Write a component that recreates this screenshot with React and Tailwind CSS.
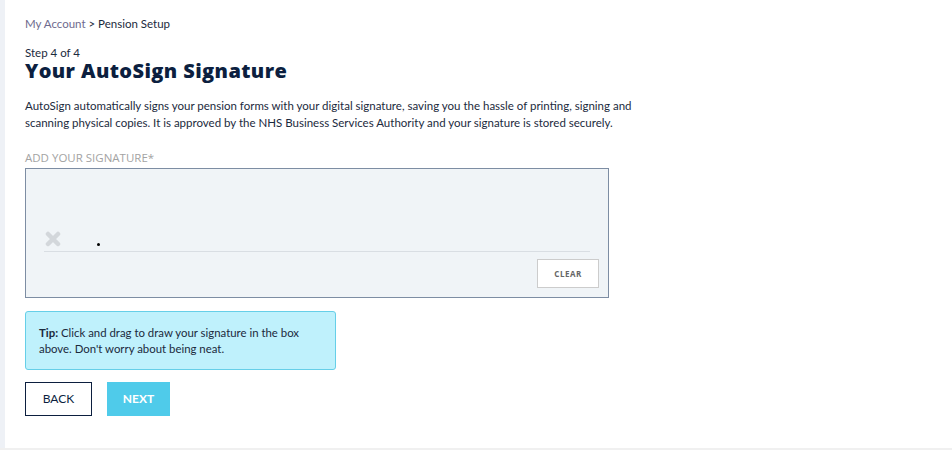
export default function App() {
  return (
    <div className="w-[952px] h-[450px] bg-[#f0f0f0] flex flex-col">
      <div className="flex h-[448px]">
        <div className="w-[5px] bg-[#eef1f6]" />
        <div className="flex-1 bg-white pl-[20px] pt-[16px] font-['Lato','Liberation_Sans',sans-serif] text-[#1b2a3d]">
          <div className="text-[11.5px] leading-[15px]">
            <span className="text-[#6e6a8e]">My Account</span>
            <span> &gt; Pension Setup</span>
          </div>
          <div className="mt-[15px] text-[11.5px] leading-[13px]">Step 4 of 4</div>
          <h1 className="font-['Open_Sans','Liberation_Sans',sans-serif] font-extrabold text-[20px] leading-[24px] text-[#0c1f3f] tracking-[0.4px]">
            Your AutoSign Signature
          </h1>
          <p className="mt-[14px] text-[11.5px] leading-[17px] w-[640px]">
            AutoSign automatically signs your pension forms with your digital signature, saving you the hassle of printing, signing and scanning physical copies. It is approved by the NHS Business Services Authority and your signature is stored securely.
          </p>
          <div className="mt-[20px] text-[11.5px] leading-[14px] text-[#a3a3a3] font-['Open_Sans','Liberation_Sans',sans-serif]">
            ADD YOUR SIGNATURE*
          </div>
          <div className="mt-[3px] w-[584px] h-[130px] border-[1.5px] border-[#7d8da3] bg-[#f0f4f7] flex flex-col pl-[18px] pr-[9px]">
            <div className="h-[60px]" />
            <div className="flex items-end h-[23px] w-[546px] border-b border-[#d9dee3] relative">
              <svg width="16" height="16" viewBox="0 0 16 16" className="mb-[4px] ml-[1px]">
                <path d="M3 3 L13 13 M13 3 L3 13" stroke="#d3d7db" strokeWidth="4.5" strokeLinecap="round" />
              </svg>
              <div className="absolute left-[53px] top-[14px] w-[2.5px] h-[2.5px] rounded-full bg-black" />
            </div>
            <div className="flex justify-end mt-[7px]">
              <button className="w-[62px] h-[29px] bg-white border border-[#cccccc] text-[8px] font-bold tracking-[0.5px] text-[#666] font-['Open_Sans','Liberation_Sans',sans-serif]">
                CLEAR
              </button>
            </div>
          </div>
          <div className="mt-[13px] w-[311px] h-[59px] bg-[#bff1fc] border border-[#66cfe8] rounded-[3px] px-[13px] pt-[13px] text-[11.4px] leading-[16px]">
            <b>Tip:</b> Click and drag to draw your signature in the box above. Don't worry about being neat.
          </div>
          <div className="mt-[12px] flex gap-[15px]">
            <button className="w-[67px] h-[34px] border-[1.5px] border-[#0c1f3f] text-[12px] text-[#0c1f3f]">BACK</button>
            <button className="w-[63px] h-[34px] bg-[#4fcbea] text-white font-bold text-[12px]">NEXT</button>
          </div>
        </div>
      </div>
    </div>
  );
}
